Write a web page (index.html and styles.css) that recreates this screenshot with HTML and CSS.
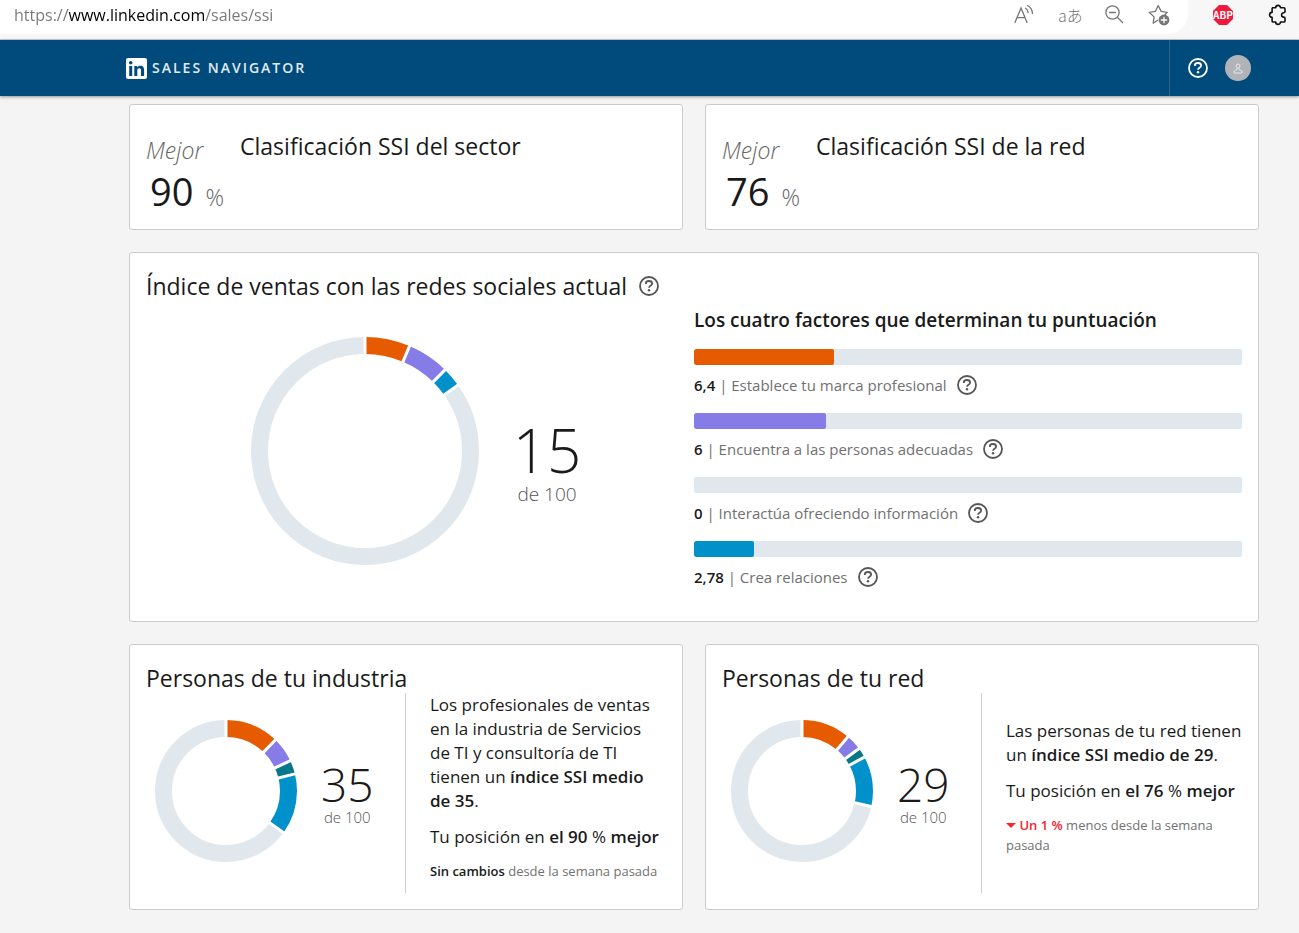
FILE: index.html
```html
<!DOCTYPE html>
<html lang="es">
<head>
<meta charset="utf-8">
<meta name="viewport" content="width=device-width, initial-scale=1">
<title>Sales Navigator - Índice de ventas con las redes sociales</title>
<link rel="stylesheet" href="styles.css">
</head>
<body>
<svg class="defs" aria-hidden="true">
  <symbol id="help" viewBox="0 0 20 20">
    <circle cx="10" cy="10" r="9" fill="none" stroke="currentColor" stroke-width="1.8"/>
    <path d="M6.900 7.900V7.300C6.900 5.900 8.200 5 10 5s3.100 1 3.100 2.500c0 1.200-.6 1.800-1.600 2.300-.9.5-1.400.9-1.400 2" fill="none" stroke="currentColor" stroke-width="1.8"/>
    <circle cx="10" cy="14.300" r="1.200" fill="currentColor"/>
  </symbol>
</svg>

<div class="browser">
  <div class="omnibox">
    <input class="url" type="text" aria-label="Dirección" value="https://www.linkedin.com/sales/ssi">
    <div class="tools">
      <button class="tool" type="button" aria-label="Leer en voz alta">
        <svg width="22" height="22" viewBox="0 0 22 22" fill="none" stroke="currentColor" stroke-width="1.3" stroke-linecap="round"><path d="M2 18.500 8 4l6 14.500M4.200 13.600h7.600M12.600 4.300c1.500 1 2.300 2.400 2.500 4.200M14.500 1.500c3 1.500 4.700 4.200 5 8"/></svg>
      </button>
      <button class="tool translate" type="button" aria-label="Traducir">aあ</button>
      <button class="tool" type="button" aria-label="Alejar">
        <svg width="22" height="22" viewBox="0 0 22 22" fill="none" stroke="currentColor" stroke-width="1.3" stroke-linecap="round"><circle cx="9.500" cy="8.500" r="6.600"/><path d="m14.300 13.300 5.200 5.200M6.500 8.500h6"/></svg>
      </button>
      <button class="tool" type="button" aria-label="Agregar a favoritos">
        <svg width="22" height="22" viewBox="0 0 22 22" fill="none" stroke="currentColor" stroke-width="1.300" stroke-linejoin="round" stroke-linecap="round"><path d="M9.500 16.300 5.200 19.200l.9-6.300L1.200 8.300l6.200-.9L10.200 1.500l2.900 5.900 6.200.9-2.200 2.200"/><circle cx="16" cy="16" r="5.400" fill="currentColor" stroke="none"/><path d="M13.300 16h5.400M16 13.300v5.400" stroke="#fff"/></svg>
      </button>
    </div>
  </div>
  <div class="extensions">
    <button class="ext" type="button" aria-label="Adblock Plus">
      <svg width="22" height="22" viewBox="0 0 22 22"><path d="M7 1h8l6 6v8l-6 6H7l-6-6V7z" fill="#f01a3c"/><text x="11" y="15" text-anchor="middle" class="abp">ABP</text></svg>
    </button>
    <button class="ext" type="button" aria-label="Extensiones">
      <svg width="22" height="22" viewBox="0 0 22 22" fill="none" stroke="#111" stroke-width="1.600" stroke-linejoin="round"><path d="M5.500 3.800h3.200a2.400 2.400 0 0 1 4.800 0h3.400c.7 0 1.100.4 1.100 1.100v2.600c0 .9-.4 1.200-1.200 1.200a2.200 2.200 0 0 0 0 4.400c.8 0 1.200.4 1.200 1.200v2.600c0 .7-.4 1.100-1.100 1.100h-3.400a2.400 2.400 0 0 1-4.800 0H6.200c-.7 0-1.100-.4-1.100-1.100v-3.500a2.500 2.500 0 0 1 0-5V4.900c0-.6.200-.9.400-1.100z"/></svg>
    </button>
  </div>
</div>

<header class="topbar">
  <a class="brand" href="#">
    <svg width="21" height="21" viewBox="0 0 21 21" role="img" aria-label="LinkedIn"><rect width="21" height="21" rx="2" fill="#fff"/><g fill="#004b7c"><circle cx="4.700" cy="4.700" r="1.800"/><rect x="3.200" y="8" width="3" height="10"/><path d="M8.300 8h2.900v1.400c.6-1 1.700-1.700 3.200-1.700 2.900 0 3.700 1.900 3.700 4.600V18H15v-5c0-1.500-.2-2.700-1.700-2.700s-2 1.100-2 2.700v5h-3z"/></g></svg>
    <span>SALES NAVIGATOR</span>
  </a>
  <div class="account">
    <button class="icon-btn" type="button" aria-label="Ayuda"><svg width="20" height="20"><use href="#help"/></svg></button>
    <button class="avatar" type="button" aria-label="Tu perfil">
      <svg width="10" height="11" viewBox="0 0 10 11" fill="none" stroke="#e2e5e8" stroke-width="1"><circle cx="5" cy="3" r="2"/><path d="M4 5v1.500L1 8v2h8V8L6 6.500V5"/></svg>
    </button>
  </div>
</header>

<main class="page">
  <section class="card rank">
    <p class="rank-value"><em>Mejor</em><span><strong>90</strong> <small>%</small></span></p>
    <h2>Clasificación SSI del sector</h2>
  </section>
  <section class="card rank">
    <p class="rank-value"><em>Mejor</em><span><strong>76</strong> <small>%</small></span></p>
    <h2>Clasificación SSI de la red</h2>
  </section>

  <section class="card wide">
    <div class="title-row">
      <h2>Índice de ventas con las redes sociales actual</h2>
      <button class="icon-btn" type="button" aria-label="Acerca del índice"><svg width="20" height="20"><use href="#help"/></svg></button>
    </div>
    <div class="index">
      <div class="gauge large">
        <svg width="228" height="228" viewBox="-114 -114 228 228" role="img" aria-label="15 de 100">
          <g class="ring" transform="rotate(-90)">
            <circle r="105.500" class="track" pathLength="100" stroke-dasharray="84.800 100" stroke-dashoffset="-15.200"/>
            <circle r="105.500" class="blue" pathLength="100" stroke-dasharray="2.800 100" stroke-dashoffset="-12.400"/>
            <circle r="105.500" class="purple" pathLength="100" stroke-dasharray="6 100" stroke-dashoffset="-6.400"/>
            <circle r="105.500" class="orange" pathLength="100" stroke-dasharray="6.400 100"/>
          </g>
          <g class="cuts">
            <path d="M0-96v-19"/><path d="M0-96v-19" transform="rotate(23)"/><path d="M0-96v-19" transform="rotate(44.600)"/><path d="M0-96v-19" transform="rotate(54.700)"/>
          </g>
        </svg>
        <p class="score"><b>15</b><span>de 100</span></p>
      </div>
      <div class="factors">
        <h3>Los cuatro factores que determinan tu puntuación</h3>
        <ul>
          <li><div class="bar"><i class="fill orange" style="width:25.6%"></i></div><div class="factor"><span><b>6,4</b> | Establece tu marca profesional</span><button class="icon-btn" type="button" aria-label="Acerca de tu marca profesional"><svg width="20" height="20"><use href="#help"/></svg></button></div></li>
          <li><div class="bar"><i class="fill purple" style="width:24%"></i></div><div class="factor"><span><b>6</b> | Encuentra a las personas adecuadas</span><button class="icon-btn" type="button" aria-label="Acerca de las personas adecuadas"><svg width="20" height="20"><use href="#help"/></svg></button></div></li>
          <li><div class="bar"><i class="fill teal" style="width:0%"></i></div><div class="factor"><span><b>0</b> | Interactúa ofreciendo información</span><button class="icon-btn" type="button" aria-label="Acerca de ofrecer información"><svg width="20" height="20"><use href="#help"/></svg></button></div></li>
          <li><div class="bar"><i class="fill blue" style="width:11%"></i></div><div class="factor"><span><b>2,78</b> | Crea relaciones</span><button class="icon-btn" type="button" aria-label="Acerca de las relaciones"><svg width="20" height="20"><use href="#help"/></svg></button></div></li>
        </ul>
      </div>
    </div>
  </section>

  <section class="card people">
    <h2>Personas de tu industria</h2>
    <div class="compare">
      <div class="gauge small">
        <svg width="142" height="142" viewBox="-71 -71 142 142" role="img" aria-label="35 de 100">
          <g class="ring" transform="rotate(-90)">
            <circle r="62.500" class="track" pathLength="100" stroke-dasharray="65 100" stroke-dashoffset="-35"/>
            <circle r="62.500" class="blue" pathLength="100" stroke-dasharray="13.900 100" stroke-dashoffset="-21.100"/>
            <circle r="62.500" class="teal" pathLength="100" stroke-dasharray="3.100 100" stroke-dashoffset="-18"/>
            <circle r="62.500" class="purple" pathLength="100" stroke-dasharray="5.800 100" stroke-dashoffset="-12.200"/>
            <circle r="62.500" class="orange" pathLength="100" stroke-dasharray="12.200 100"/>
          </g>
          <g class="cuts">
            <path d="M0-53v-19"/><path d="M0-53v-19" transform="rotate(44)"/><path d="M0-53v-19" transform="rotate(64.800)"/><path d="M0-53v-19" transform="rotate(76)"/><path d="M0-53v-19" transform="rotate(126)"/>
          </g>
        </svg>
        <p class="score"><b>35</b><span>de 100</span></p>
      </div>
      <div class="summary">
        <p class="industry">Los profesionales de ventas en la industria de Servicios de TI y consultoría de TI tienen un <b>índice SSI medio de 35</b>.</p>
        <p>Tu posición en <b>el 90</b> % <b>mejor</b></p>
        <p class="change"><b>Sin cambios</b> desde la semana pasada</p>
      </div>
    </div>
  </section>
  <section class="card people">
    <h2>Personas de tu red</h2>
    <div class="compare">
      <div class="gauge small">
        <svg width="142" height="142" viewBox="-71 -71 142 142" role="img" aria-label="29 de 100">
          <g class="ring" transform="rotate(-90)">
            <circle r="62.500" class="track" pathLength="100" stroke-dasharray="71.500 100" stroke-dashoffset="-28.500"/>
            <circle r="62.500" class="blue" pathLength="100" stroke-dasharray="11.400 100" stroke-dashoffset="-17.100"/>
            <circle r="62.500" class="teal" pathLength="100" stroke-dasharray="2.300 100" stroke-dashoffset="-14.800"/>
            <circle r="62.500" class="purple" pathLength="100" stroke-dasharray="3.600 100" stroke-dashoffset="-11.200"/>
            <circle r="62.500" class="orange" pathLength="100" stroke-dasharray="11.200 100"/>
          </g>
          <g class="cuts">
            <path d="M0-53v-19"/><path d="M0-53v-19" transform="rotate(40.300)"/><path d="M0-53v-19" transform="rotate(53.300)"/><path d="M0-53v-19" transform="rotate(61.500)"/><path d="M0-53v-19" transform="rotate(102.600)"/>
          </g>
        </svg>
        <p class="score"><b>29</b><span>de 100</span></p>
      </div>
      <div class="summary">
        <p>Las personas de tu red tienen un <b>índice SSI medio de 29</b>.</p>
        <p>Tu posición en <b>el 76</b> % <b>mejor</b></p>
        <p class="change"><span class="down"><svg width="10" height="8" viewBox="0 0 10 8" aria-hidden="true"><path d="M0 1h10L5 6z" fill="currentColor"/></svg> <b>Un 1 %</b></span> menos desde la semana pasada</p>
      </div>
    </div>
  </section>
</main>
</body>
</html>
```
FILE: styles.css
```css
* { box-sizing: border-box; }
body {
  margin: 0;
  background: #f4f4f4;
  color: #1a1a1a;
  font-family: "Open Sans", "Noto Sans", sans-serif;
  font-weight: 400;
  font-size: 17px;
  line-height: 24px;
}
h2, h3, p, ul { margin: 0; padding: 0; }
ul { list-style: none; }
b { font-weight: 600; }
button { border: 0; padding: 0; background: none; color: inherit; font: inherit; cursor: pointer; }
svg { display: block; }
.defs { position: absolute; width: 0; height: 0; }

/* Browser toolbar */
.browser { display: flex; height: 40px; background: #f7f7f7; border-bottom: 1px solid #ccc; }
.omnibox { flex: 1; display: flex; height: 34px; background: #fff; border-bottom-right-radius: 20px; padding: 0 18px 5px 14px; }
.url {
  flex: 1;
  min-width: 0;
  border: 0;
  padding: 0;
  outline: 0;
  font: 400 16px "Open Sans", sans-serif;
  color: transparent;
  background: linear-gradient(90deg, #777 54px, #000 54px, #000 190px, #777 190px);
  -webkit-background-clip: text;
  background-clip: text;
}
.tools { display: flex; align-items: center; gap: 23px; color: #767676; }
.tool { display: grid; place-items: center; width: 22px; height: 22px; }
.translate { font: 300 16px/22px "Noto Sans CJK JP", sans-serif; white-space: nowrap; }
.extensions { display: flex; align-items: center; gap: 33px; width: 111px; padding: 0 0 9px 24px; }
.ext { flex: none; }
.abp { font: 700 10px "Noto Sans CJK JP", sans-serif; fill: #fff; }

/* Header */
.topbar { display: flex; justify-content: space-between; height: 56px; padding: 0 48px 0 126px; background: #004b7c; color: #fff; box-shadow: 0 1px 3px rgba(0, 0, 0, .4); }
.brand { display: flex; align-items: center; gap: 5px; color: #e0eaf0; font-size: 14px; font-weight: 600; letter-spacing: 2px; text-decoration: none; }
.account { display: flex; align-items: center; gap: 17px; padding-left: 18px; border-left: 1px solid #2a6890; }
.avatar { display: grid; place-items: center; width: 26px; height: 26px; border-radius: 50%; background: #b0b4b8; }
.icon-btn { flex: none; width: 20px; height: 20px; }

/* Cards */
.page { display: grid; grid-template-columns: 1fr 1fr; gap: 22px; padding: 8px 40px 23px 129px; }
.card { background: #fff; border: 1px solid #ccc; border-radius: 3px; padding: 16px; }
.card h2 { font-size: 23px; font-weight: 400; line-height: 34px; }
.wide { grid-column: 1 / -1; }

.rank { display: flex; gap: 16px; padding: 24px 16px 12px; }
.rank-value { display: flex; flex-direction: column; color: #666; font-size: 23px; font-weight: 300; line-height: 42px; }
.rank-value span { display: flex; align-items: baseline; gap: 12px; padding-left: 4px; line-height: 40px; }
.rank-value strong { color: #1a1a1a; font-size: 38px; font-weight: 400; }
.rank-value small { font-size: 23px; }

.title-row { display: flex; align-items: center; gap: 12px; }
.title-row .icon-btn, .factor .icon-btn { color: #555; }
.index { display: grid; grid-template-columns: 1fr 1fr; }
.gauge { display: flex; align-items: center; }
.gauge svg { flex: none; }
.large { justify-content: center; gap: 34px; padding: 0 8px 6px 0; }
.score { display: flex; flex-direction: column; align-items: center; padding-top: 26px; color: #555; font-size: 19px; font-weight: 300; line-height: 28px; }
.score b { color: #1a1a1a; font-size: 60px; font-weight: 300; line-height: 60px; }

.ring circle { fill: none; stroke-width: 17; }
.track { stroke: #e1e8ed; }
circle.orange { stroke: #e65a00; }
circle.purple { stroke: #867ce8; }
circle.teal { stroke: #077887; }
circle.blue { stroke: #0091ca; }
.cuts { stroke: #fff; stroke-width: 3; }

.factors h3 { padding: 3px 0 15px; font-size: 19px; font-weight: 600; line-height: 28px; }
.factors li { height: 64px; }
.bar { height: 16px; border-radius: 2px; background: #e1e8ed; overflow: hidden; }
.fill { display: block; height: 100%; border-radius: 2px; }
.fill.orange { background: #e65a00; }
.fill.purple { background: #867ce8; }
.fill.teal { background: #077887; }
.fill.blue { background: #0091ca; }
.factor { display: flex; align-items: center; gap: 10px; padding-top: 8px; color: #717171; font-size: 15px; }
.factor b { color: #1a1a1a; }

.compare { display: grid; grid-template-columns: 260px 1fr; min-height: 200px; margin: -2px -8px 0 0; }
.small { gap: 24px; padding-left: 9px; border-right: 1px solid #ccc; }
.small svg { margin-bottom: 4px; }
.small .score { padding-top: 2px; font-size: 15px; line-height: 20px; }
.small .score b { font-size: 46px; line-height: 46px; }
.summary { display: flex; flex-direction: column; justify-content: center; gap: 12px; padding: 0 0 12px 24px; }
.industry { padding-right: 20px; }
.summary .change { color: #717171; font-size: 13px; line-height: 20px; }
.change b { color: #1a1a1a; }
.down, .down b { color: #f5242f; }
.down svg { display: inline-block; }
```
